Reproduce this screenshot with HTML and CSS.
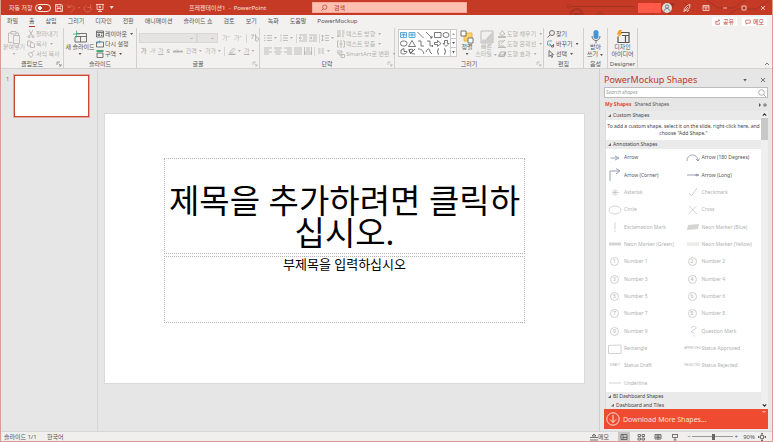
FILE: index.html
```html
<!DOCTYPE html>
<html lang="ko">
<head>
<meta charset="utf-8">
<title>프레젠테이션1 - PowerPoint</title>
<link rel="stylesheet" href="styles.css">
</head>
<body>
<div class="window">
<header class="titlebar">
  <div class="quick">
    <label class="autosave">자동 저장 <input type="checkbox" class="toggle"></label>
    <button class="tb" aria-label="저장"><svg viewBox="0 0 10 10"><path d="M1.500 1.500h6l1 1v6h-7zM3 1.500v2.500h4v-2.500M3 8.500v-3h4v3"/></svg></button>
    <button class="tb dim" aria-label="실행 취소"><svg viewBox="0 0 10 10"><path d="M2 1.500v3h3M2 4.500c2-3 6-2 6 .5S6 8 4.500 9"/></svg></button>
    <span class="caret dim"></span>
    <button class="tb dim" aria-label="다시 실행"><svg viewBox="0 0 10 10"><path d="M7.500 1.500v3h-3M7.500 3.500A3.500 3.500 0 1 1 3 2.500"/></svg></button>
    <button class="tb" aria-label="슬라이드 쇼"><svg viewBox="0 0 10 10"><path d="M1 1.500h8M2 1.500v5h6v-5M5 6.500v2M3 8.500h4M4.300 3v2l1.700-1z"/></svg></button>
    <span class="caret wide"></span>
  </div>
  <div class="doc">프레젠테이션1 &nbsp;-&nbsp; PowerPoint</div>
  <label class="find"><svg viewBox="0 0 10 10"><circle cx="6" cy="4" r="2.700"/><path d="M4 6L1.500 8.500"/></svg><input type="text" placeholder="검색" aria-label="검색"></label>
  <div class="sys">
    <svg class="circuit" viewBox="0 0 306 15"><circle cx="102" cy="6.500" r="1.500"/><path d="M104 6.500h64M190 2c-8 5-5 10-3 13M217 2c8 5 5 10 3 13M240 0l12 8h15l12-8M262 15l9-6h20l12-9M130 15a4 4 0 0 1 7 0"/><path d="M104 15a6 6 0 0 1 12 0M107 14h7M198 4h9l-5 10" stroke-width="2"/></svg>
    <span class="user"></span>
    <button class="avatar" aria-label="계정"><svg viewBox="0 0 10 10"><circle cx="5" cy="3.500" r="1.600"/><path d="M2 8.500c0-4 6-4 6 0"/></svg></button>
    <button class="tb" aria-label="펜"><svg viewBox="0 0 10 10"><path d="M2 8.500c0-3 2-6 6-7 0 4-2 6-5 6zM2 8.500L6 4M5 9l2-2"/></svg></button>
    <button class="tb" aria-label="리본 표시 옵션"><svg viewBox="0 0 10 10"><path d="M2 2.500h6v5h-6zM2 4h6M5 7v-2M4 5.500l1-1 1 1"/></svg></button>
    <button class="tb" aria-label="최소화"><svg viewBox="0 0 10 10"><path d="M3 5h4"/></svg></button>
    <button class="tb" aria-label="최대화"><svg viewBox="0 0 10 10"><path d="M3 3h4v4h-4z"/></svg></button>
    <button class="tb" aria-label="닫기"><svg viewBox="0 0 10 10"><path d="M3 3l4 4M7 3l-4 4"/></svg></button>
  </div>
</header>

<nav class="tabs">
  <a href="#">파일</a><a href="#" class="on">홈</a><a href="#">삽입</a><a href="#">그리기</a><a href="#">디자인</a><a href="#">전환</a><a href="#">애니메이션</a><a href="#">슬라이드 쇼</a><a href="#">검토</a><a href="#">보기</a><a href="#">녹화</a><a href="#">도움말</a><a href="#">PowerMockup</a>
  <div class="share">
    <button><svg viewBox="0 0 8 8"><path d="M3 3h-2v4h5v-2M2.500 5c0-2 1-3 3-3M4.500.500l2 1.500-2 1.500"/></svg>공유</button>
    <button><svg viewBox="0 0 8 8"><path d="M1 1.500h6v4h-3.500l-1.500 1.500v-1.500h-1z"/></svg>메모</button>
  </div>
</nav>

<section class="ribbon">
  <div class="group clip">
    <div class="tools">
      <button class="big off"><svg viewBox="0 0 14 14"><path d="M4 3h-2.500v9.500h4M9 3h2.500v2M4 1.500h5v2.500h-5z"/><path d="M6.500 5.500h6v8h-6z"/></svg>붙여넣기<span class="caret"></span></button>
      <div class="stack off">
        <button><svg viewBox="0 0 8 8"><path d="M2 0l3.500 6M6 0l-3.500 6"/><circle cx="2" cy="6.700" r="1"/><circle cx="6" cy="6.700" r="1"/></svg>잘라내기</button>
        <button><svg viewBox="0 0 8 8"><path d="M3 6h-2.500v-5h3l1 1M3.500 2.500h2.500l1.500 1.500v3.500h-4z"/></svg>복사<span class="caret"></span></button>
        <button><svg viewBox="0 0 8 8"><path d="M1 4l3-2 2 3-2 2.500zM5 2.500l2.500-2"/></svg>서식 복사</button>
      </div>
    </div>
    <h2>클립보드</h2><svg class="launch" viewBox="0 0 6 6"><path d="M1 4v-3h3M2.500 2.500l2.500 2.500M5 3v2h-2"/></svg>
  </div>
  <div class="group slides">
    <div class="tools">
      <button class="big"><svg viewBox="0 0 14 14"><path d="M3 3.500h10.500v8.500h-11.500v-5M2 6.500h11.500M7.500 6.500v5.500"/><path class="green" d="M0 4h7M3.500 .500v7"/></svg>새 슬라이드<span class="caret"></span></button>
      <div class="stack">
        <button><svg viewBox="0 0 8 8"><path d="M.500 1h7v6h-7zM.500 2.500h7M2 4h1.500v1.500h-1.500zM5 4h1.500M5 5.500h1.500"/></svg>레이아웃<span class="caret"></span></button>
        <button><svg viewBox="0 0 8 8"><path d="M.500 2h7v5h-7z"/><path class="blue" d="M1 4a2 2 0 0 1 3-2M3.500 .500l1 1.500-1.500 1"/></svg>다시 설정</button>
        <button><svg viewBox="0 0 8 8"><path class="green" d="M.500 1h7" stroke-width="2"/><path d="M1 3h6v4.500h-6z"/></svg>구역<span class="caret"></span></button>
      </div>
    </div>
    <h2>슬라이드</h2>
  </div>
  <div class="group font">
    <div class="tools col off">
      <div class="line">
        <select class="family" aria-label="글꼴" disabled><option></option></select><select class="size" aria-label="글꼴 크기" disabled><option></option></select>
        <button>가ˆ</button><button>가ˇ</button><i class="sep"></i><button aria-label="서식 지우기"><svg viewBox="0 0 8 8"><path d="M0 1h3l-2.500 4M4.500 0v5M4.500 2.500h1.500M4 6l2-2.500 2 1.500-2 2.500z"/></svg></button>
      </div>
      <div class="line tight">
        <button><b>가</b></button><button><em>가</em></button><button><u>가</u></button><button><b>S</b></button><button><s>abc</s></button><button>간격<span class="caret"></span></button><button>가가<span class="caret"></span></button><i class="sep"></i>
        <button aria-label="형광펜"><svg viewBox="0 0 8 8"><path d="M2 5l3.500-4 1.500 1.500-3.500 3.500h-1.500z"/><path d="M.500 7.300h7" stroke-width="1.400"/></svg><span class="caret"></span></button>
        <button><u>가</u><span class="caret"></span></button>
      </div>
    </div>
    <h2>글꼴</h2><svg class="launch faint" viewBox="0 0 6 6"><path d="M1 4v-3h3M2.500 2.500l2.500 2.500M5 3v2h-2"/></svg>
  </div>
  <div class="group para">
    <div class="tools off">
      <div class="col">
        <div class="line">
          <button aria-label="글머리 기호"><svg viewBox="0 0 8 8"><path d="M0 1.500h1.500M3 1.500h5M0 4h1.500M3 4h5M0 6.500h1.500M3 6.500h5"/></svg><span class="caret"></span></button>
          <button aria-label="번호 매기기"><svg viewBox="0 0 8 8"><path d="M1 .500v2M3 1.500h5M.500 4h1M3 4h5M1 5.500v2M3 6.500h5"/></svg><span class="caret"></span></button>
          <i class="sep"></i>
          <button aria-label="내어쓰기"><svg viewBox="0 0 8 8"><path d="M0 1h8M4 3h4M4 5h4M0 7h8M3 4h-3M1.500 2.500l-1.500 1.500 1.500 1.500"/></svg></button>
          <button aria-label="들여쓰기"><svg viewBox="0 0 8 8"><path d="M0 1h8M4 3h4M4 5h4M0 7h8M0 4h3M1.500 2.500l1.500 1.500-1.500 1.500"/></svg></button>
          <i class="sep"></i>
          <button aria-label="줄 간격"><svg viewBox="0 0 8 8"><path d="M1.500 1v6M0 2.500l1.500-1.500 1.500 1.500M0 5.500l1.500 1.500 1.500-1.500M4 1.500h4M4 4h4M4 6.500h4"/></svg><span class="caret"></span></button>
        </div>
        <div class="line">
          <button aria-label="왼쪽 맞춤"><svg viewBox="0 0 8 8"><path d="M0 1h8M0 3h5M0 5h8M0 7h5"/></svg></button>
          <button aria-label="가운데 맞춤"><svg viewBox="0 0 8 8"><path d="M0 1h8M1.500 3h5M0 5h8M1.500 7h5"/></svg></button>
          <button aria-label="오른쪽 맞춤"><svg viewBox="0 0 8 8"><path d="M0 1h8M3 3h5M0 5h8M3 7h5"/></svg></button>
          <button aria-label="양쪽 맞춤"><svg viewBox="0 0 8 8"><path d="M0 1h8M0 3h8M0 5h8M0 7h8"/></svg></button>
          <button aria-label="균등 분할"><svg viewBox="0 0 8 8"><path d="M.500 0v8M7.500 0v8M2 1h4M2 3h4M0 5h8M0 7h8"/></svg></button>
          <i class="sep"></i>
          <button aria-label="단"><svg viewBox="0 0 8 8"><path d="M1 2h2.500M4.500 2h2.500M1 4h2.500M4.500 4h2.500M1 6h2.500M4.500 6h2.500"/></svg><span class="caret"></span></button>
        </div>
      </div>
      <div class="stack">
        <button><svg viewBox="0 0 8 8"><path d="M1 0v7M3 0v7M0 5.500l1 1.500 1-1.500M5 1h2.500M5 3h2.500M6 4v3.500"/></svg>텍스트 방향<span class="caret"></span></button>
        <button><svg viewBox="0 0 8 8"><path d="M2 1h-1.500v6h1.500M6 1h1.500v6h-1.500M4 0v8M2.500 4h3"/></svg>텍스트 맞춤<span class="caret"></span></button>
        <button><svg viewBox="0 0 8 8"><path d="M0 1h5v2h-5zM2 3v2h4M4 4.500h3.500v3h-3.500z"/></svg>SmartArt로 변환<span class="caret"></span></button>
      </div>
    </div>
    <h2>단락</h2><svg class="launch faint" viewBox="0 0 6 6"><path d="M1 4v-3h3M2.500 2.500l2.500 2.500M5 3v2h-2"/></svg>
  </div>
  <div class="group draw">
    <div class="tools">
      <div class="gallery">
        <svg viewBox="0 0 51 26">
          <g class="blue"><path d="M1.500 2.500h6v5h-6zM10 2.500h6v5h-6zM3 4h3M4.500 4v3M11.500 4h3M13 4v3M1.500 5h6M10 5h6"/></g>
          <path d="M18.500 2l6 6M27 2l6 6M33 8v-2M33 8h-2M35.500 2.500h6.500v5h-6.500z"/><ellipse cx="47" cy="5" rx="3" ry="2.500"/>
          <rect x="1.500" y="11" width="6.500" height="5" rx="2.500"/><path d="M13 10.500l3.500 6h-7zM19 11h3v5h3M28 11h3v5h3M33 15l1 1-1 1M35.500 12.500h3v-2l3.500 3-3.500 3v-2h-3zM45.500 10.500h3v3h1.500l-3 3-3-3h1.500z"/>
          <path d="M2 23v-3l3-1.500v3l3 0c0 3-6 3-6 1.500zM10 19c0 3 2 5 6 5M11 24l5-5M10 20l3-1 1 2-3 2zM19 19c4 0 5 2 6 5M27 22c2-5 4-3 4 0l2 2M40 18.500c-2 0 0 3-2 3 2 0 0 3 2 3M45 18.500c2 0 0 3 2 3-2 0 0 3-2 3"/>
        </svg>
        <div class="scrolls"><button aria-label="위"><span class="caret up"></span></button><button aria-label="아래"><span class="caret"></span></button><button aria-label="자세히"><span class="caret more"></span></button></div>
      </div>
      <button class="big slim"><svg viewBox="0 0 14 14"><path class="gold" d="M4 3h8v8h-8z"/><path class="paper" d="M1 1h5v5h-5zM8 8h5v5h-5z"/></svg>정렬<span class="caret"></span></button>
      <button class="big slim off"><svg viewBox="0 0 14 14"><path d="M1 1h12v12h-12z"/><path class="grey" d="M1 13c1-5 3-4 4-3l8-9v12z"/></svg>빠른<span>스타일<span class="caret"></span></span></button>
      <div class="stack off">
        <button><svg viewBox="0 0 8 8"><path d="M1.500 4l3-3 2.500 3-3 1.500zM4 1v-1" /><path d="M0 7h8" stroke-width="1.600"/></svg>도형 채우기<span class="caret"></span></button>
        <button><svg viewBox="0 0 8 8"><path d="M6 1h-5v5h5M3 4l4-4"/><path d="M0 7.300h8" stroke-width="1.200"/></svg>도형 윤곽선<span class="caret"></span></button>
        <button><svg viewBox="0 0 8 8"><path d="M1 5l2-3h4.500l-2 3zM1 5v1.500h5l1.500-2.500v-2" stroke-width="1.200"/></svg>도형 효과<span class="caret"></span></button>
      </div>
    </div>
    <h2>그리기</h2><svg class="launch faint" viewBox="0 0 6 6"><path d="M1 4v-3h3M2.500 2.500l2.500 2.500M5 3v2h-2"/></svg>
  </div>
  <div class="group edit">
    <div class="tools"><div class="stack">
      <button><svg viewBox="0 0 8 8"><circle cx="5" cy="3" r="2.500"/><path d="M3 5l-2.500 2.500"/></svg>찾기</button>
      <button><svg viewBox="0 0 8 8"><path class="blue" d="M5 1h-3.500a1 1 0 0 0-1 1v3h3M2.500 3.500l1.500 1.500-1.500 1.500"/><path d="M6.500 4v3h-2v-1.500h2"/></svg>바꾸기<span class="caret"></span></button>
      <button><svg viewBox="0 0 8 8"><path d="M2 .500v6l1.500-1.500 1.200 2.500 1-.500-1.200-2.300h2z"/></svg>선택<span class="caret"></span></button>
    </div></div>
    <h2>편집</h2>
  </div>
  <div class="group voice">
    <div class="tools"><button class="big"><svg viewBox="0 0 14 14"><rect class="mic" x="4.500" y="0" width="5" height="9" rx="2.500"/><path d="M3 6c0 6 8 6 8 0M7 10.500v3"/></svg>받아<span>쓰기<span class="caret"></span></span></button></div>
    <h2>음성</h2>
  </div>
  <div class="group designer">
    <div class="tools"><button class="big"><svg viewBox="0 0 14 14"><path d="M5 2.500h8v10h-11v-6M6 5.500h7M9.500 5.500v7" stroke-width="1.200"/><path class="bolt" d="M3 0h3l-1.500 3h2l-5 5 1.200-3.500h-2z"/></svg>디자인<span>아이디어</span></button></div>
    <h2>Designer</h2>
  </div>
  <button class="collapse" aria-label="리본 메뉴 축소"><svg viewBox="0 0 6 6"><path d="M1 4l2-2 2 2"/></svg></button>
</section>

<main class="work">
  <aside class="thumbs"><span>1</span><a href="#" class="thumb" aria-label="슬라이드 1"></a></aside>
  <div class="canvas">
    <article class="slide">
      <h1 class="ph title">제목을 추가하려면 클릭하십시오.</h1>
      <p class="ph sub">부제목을 입력하십시오</p>
    </article>
  </div>
  <aside class="pane">
    <div class="panehead"><h2>PowerMockup Shapes</h2><span class="caret"></span><button aria-label="창 닫기"><svg viewBox="0 0 6 6"><path d="M1 1l4 4M5 1l-4 4"/></svg></button></div>
    <label class="lookup"><input type="text" placeholder="Search shapes" aria-label="Search shapes"><svg viewBox="0 0 8 8"><circle cx="3.500" cy="3.500" r="2.800"/><path d="M5.500 5.500l2.500 2.500"/></svg></label>
    <div class="panetabs"><a href="#" class="cur">My Shapes</a><a href="#">Shared Shapes</a><button aria-label="추가"><svg viewBox="0 0 10 6"><path class="solid" d="M1 1l2 2-2 2z"/><path d="M5 3h4M7 1v4"/></svg></button></div>
    <div class="panelist">
      <div class="content">
        <h3>Custom Shapes</h3>
        <p class="hint">To add a custom shape, select it on the slide, right-click here, and choose "Add Shape."</p>
        <h3>Annotation Shapes</h3>
        <ul class="shapes">
          <li class="live"><svg viewBox="0 0 14 14"><path d="M2.500 7h7M7 5l4 2-4 2"/></svg>Arrow</li>
          <li class="live"><svg viewBox="0 0 14 14"><path d="M1 10c0-8 11-8 11 0M10 8l2 2 1.500-2.500"/></svg>Arrow (180 Degrees)</li>
          <li class="live"><svg viewBox="0 0 14 14"><path d="M2 13v-10h9M8 .500l4 2.500-4 3"/></svg>Arrow (Corner)</li>
          <li class="live"><svg viewBox="0 0 14 14"><path d="M1 7h10M10 6l3 1-3 1z"/></svg>Arrow (Long)</li>
          <li><svg viewBox="0 0 14 14"><path d="M7 4v7M4 7.500h7M4.500 5l5 5M9.500 5l-5 5"/></svg>Asterisk</li>
          <li><svg viewBox="0 0 14 14"><path d="M3 8l2.500 3 5.500-8"/></svg>Checkmark</li>
          <li><svg viewBox="0 0 14 14"><ellipse cx="7" cy="7" rx="6" ry="4"/></svg>Circle</li>
          <li><svg viewBox="0 0 14 14"><path d="M3 3l8 8M10.500 3l-8 8"/></svg>Cross</li>
          <li><svg viewBox="0 0 14 14"><path d="M7 2.500v7M7 10.500v1.500"/></svg>Exclamation Mark</li>
          <li><svg viewBox="0 0 14 14"><path class="mark" d="M2 5l11-1-1 5-11 1z"/></svg>Neon Marker (Blue)</li>
          <li><svg viewBox="0 0 14 14"><path class="mark" d="M1 5.500h12v3h-12z"/></svg>Neon Marker (Green)</li>
          <li><svg viewBox="0 0 14 14"><path class="mark pale" d="M1 5.500l12-.500v4h-12z"/></svg>Neon Marker (Yellow)</li>
          <li><span class="num">1</span>Number 1</li><li><span class="num">2</span>Number 2</li>
          <li><span class="num">3</span>Number 3</li><li><span class="num">4</span>Number 4</li>
          <li><span class="num">5</span>Number 5</li><li><span class="num">6</span>Number 6</li>
          <li><span class="num">7</span>Number 7</li><li><span class="num">8</span>Number 8</li>
          <li><span class="num">9</span>Number 9</li>
          <li><svg viewBox="0 0 14 14"><path d="M5 4c1-2 5-2 5 0s-4 2-5 4c1 1 3 0 3 1.500M8 11v1.500"/></svg>Question Mark</li>
          <li><svg viewBox="0 0 14 14"><path d="M.500 3.500l12.500-.500v8.500h-12.500z"/></svg>Rectangle</li>
          <li><span class="stamp">APPROVED</span>Status Approved</li>
          <li><span class="stamp">DRAFT</span>Status Draft</li>
          <li><span class="stamp">REJECTED</span>Status Rejected</li>
          <li><svg viewBox="0 0 14 14"><path d="M1 7h12"/></svg>Underline</li>
        </ul>
        <h3>BI Dashboard Shapes</h3>
        <h3 class="nested">Dashboard and Tiles</h3>
      </div>
      <div class="bar"><svg viewBox="0 0 6 6"><path d="M1.500 4l1.500-1.500 1.500 1.500"/></svg><i></i><svg viewBox="0 0 6 6"><path d="M1.500 2l1.500 1.500 1.500-1.500"/></svg></div>
    </div>
    <button class="download"><svg viewBox="0 0 14 14"><circle cx="7" cy="7" r="6.200"/><path d="M7 3v7.500M4 7.500l3 3 3-3"/></svg>Download More Shapes...<svg class="tiny" viewBox="0 0 6 6"><path d="M1.500 2l1.500 1.500 1.500-1.500"/></svg></button>
  </aside>
</main>

<footer class="status">
  <span class="count">슬라이드 1/1</span><span>한국어</span>
  <div class="views">
    <button class="notes"><svg viewBox="0 0 8 8"><path d="M0 4.500h8M0 7h8M2 3h4l-2-2z"/></svg>메모</button>
    <button class="view sel" aria-label="기본"><svg viewBox="0 0 8 8"><path d="M1 1.500h6v5h-6zM3 1.500v5M3 4.500h4"/></svg></button>
    <button class="view" aria-label="여러 슬라이드"><svg viewBox="0 0 8 8"><path d="M1 1.500h2.500v2h-2.500zM5 1.500h2.500v2h-2.500zM1 5h2.500v2h-2.500zM5 5h2.500v2h-2.500z"/></svg></button>
    <button class="view" aria-label="읽기용 보기"><svg viewBox="0 0 8 8"><path d="M1 1.500h6v4.500h-6zM4 1.500v5.500M1.500 3h5M1.500 4.500h5"/></svg></button>
    <button class="view" aria-label="슬라이드 쇼"><svg viewBox="0 0 8 8"><path d="M1 1.500h6M1.500 1.500v3h5v-3M4 4.500v2.500M2.500 7h3"/></svg></button>
    <button class="step" aria-label="축소">−</button><input type="range" min="10" max="180" value="100" aria-label="확대/축소"><button class="step" aria-label="확대">+</button>
    <span class="pct">90%</span>
    <button class="view" aria-label="창에 맞춤"><svg viewBox="0 0 8 8"><path d="M2.500 2.500h3v3h-3zM4 0v2M4 6v2M0 4h2M6 4h2M3 1l1-1 1 1M3 7l1 1 1-1M1 3l-1 1 1 1M7 3l1 1-1 1"/></svg></button>
  </div>
</footer>
</div>
</body>
</html>
```
FILE: styles.css
```css
* { box-sizing: border-box; }
body {
  margin: 0;
  font: 6px/8px "Noto Sans", "Noto Sans CJK KR", sans-serif;
  color: #555;
}
button, input, select { font: inherit; color: inherit; margin: 0; padding: 0; border: 0; background: none; }
button { display: flex; align-items: center; white-space: nowrap; }
a { color: inherit; text-decoration: none; }
h1, h2, h3, p, ul { margin: 0; padding: 0; font-weight: 400; font-size: inherit; }
svg { display: block; flex: none; width: 8px; height: 8px; fill: none; stroke: currentColor; stroke-width: 0.8; }
.green { stroke: #3fae74; }
.blue { stroke: #3a9bd0; }
.caret {
  display: inline-block; flex: none; width: 3px; height: 2px; margin: 0 1px 0 2px;
  background: currentColor; clip-path: polygon(0 0, 100% 0, 50% 100%);
}

.window {
  display: flex; flex-direction: column; height: 100vh; overflow: hidden;
  background: #e6e6e6; border: solid #dc9c92; border-width: 0 1px 1px;
}

/* Title bar */
.titlebar { display: flex; align-items: center; flex: none; height: 15px; background: #c53a24; color: #fbe3dd; }
.quick { display: flex; align-items: center; flex: 0 0 180px; padding-left: 8px; gap: 2px; }
.autosave { display: flex; align-items: center; gap: 2px; white-space: nowrap; margin-right: 1px; }
.toggle {
  appearance: none; width: 16px; height: 8px; border: 1px solid #fbe3dd; border-radius: 4px;
  background: radial-gradient(circle at 4px 3px, #fff 2px, transparent 2px);
}
.tb svg { width: 10px; height: 10px; }
.dim { color: #dc6a56; }
.quick .caret { margin: 0; }
.quick .wide { width: 4px; height: 3px; margin-left: 3px; }
.doc { flex: 0 0 131px; padding-left: 8px; white-space: nowrap; }
.find {
  display: flex; align-items: center; flex: 1; gap: 6px; height: 11px; padding-left: 7px;
  background: #ffc0b2; border: 1px solid #f9a797; color: #b02e1c;
}
.find input { flex: 1; min-width: 0; }
.find input::placeholder { color: #b02e1c; opacity: 1; }
.sys { position: relative; display: flex; align-items: center; justify-content: flex-end; flex: 0 0 305px; height: 15px; padding-right: 4px; gap: 9px; }
.circuit { position: absolute; inset: 0; width: 100%; height: 15px; stroke: #a33425; stroke-width: 1; }
.sys > :not(.circuit) { position: relative; }
.user { width: 23px; height: 10px; background: #ff594a; margin-right: -8px; }
.avatar { width: 10px; height: 10px; border-radius: 50%; background: #ddd; color: #666; margin-right: 1px; }
.avatar svg { width: 10px; height: 10px; }

/* Tabs */
.tabs { display: flex; align-items: stretch; flex: none; height: 13px; padding-left: 6px; gap: 11px; background: #f2f1f0; white-space: nowrap; line-height: 12px; }
.tabs .on { height: 12px; border-bottom: 1px solid #c53a24; color: #333; }
.share { display: flex; align-items: center; gap: 5px; margin-left: auto; padding-right: 5px; }
.share button { height: 9px; padding: 0 3px; gap: 2px; background: #fff; color: #c0392b; }
.share svg { width: 6px; height: 6px; }

/* Ribbon */
.ribbon { position: relative; display: flex; flex: none; height: 41px; background: #f2f1f0; border-bottom: 1px solid #d4d2d0; }
.group { position: relative; flex: none; display: flex; flex-direction: column; justify-content: space-between; padding-top: 1px; border-right: 1px solid #d2d0ce; }
.group h2 { text-align: center; height: 8px; }
.tools { display: flex; height: 31px; }
.clip { width: 63px; }
.slides { width: 73px; }
.font { width: 123px; }
.para { width: 135px; }
.draw { width: 149px; }
.edit { width: 40px; }
.voice { width: 24px; }
.designer { width: 30px; }
.off { color: #b3b1af; }
.big { flex-direction: column; width: 26px; height: 31px; line-height: 7px; padding-top: 1px; }
.big svg { width: 14px; height: 14px; }
.big > .caret { margin: 2px 0 0; }
.slides .big { width: 32px; }
.slim { width: 19px; }
.voice .big, .designer .big { width: 100%; }
.stack { display: flex; flex-direction: column; justify-content: space-between; height: 30px; }
.stack button { height: 10px; gap: 1px; }
.col { display: flex; flex-direction: column; justify-content: flex-start; gap: 3px; padding: 4px 0 0 2px; }
.line { display: flex; align-items: center; gap: 2px; height: 10px; }
.font .line { gap: 4px; }
.font .tight { gap: 3px; padding-left: 2px; }
.tight .caret { margin: 0 0 0 2px; }
.sep { width: 1px; height: 9px; background: #d8d6d4; }
.family, .size {
  appearance: none; height: 10px; border: 1px solid #cfcdcb; border-radius: 0;
  background: linear-gradient(#aaa, #aaa) calc(100% - 3px) 50% / 3px 1px no-repeat #e1dfdd;
}
.family { width: 63px; }
.size { width: 22px; margin-left: -4px; }
.para .tools { gap: 2px; }
.para .col { width: 75px; padding-left: 4px; }
.launch { position: absolute; right: 1px; bottom: 1px; width: 6px; height: 6px; color: #888; }
.faint { color: #bbb; }
.gallery { display: flex; flex: none; width: 59px; height: 28px; margin: 0 2px 0 3px; background: #fff; border: 1px solid #cccac8; }
.gallery > svg { width: 51px; height: 26px; }
.scrolls { display: flex; flex-direction: column; flex: 1; border-left: 1px solid #cccac8; }
.scrolls button { flex: 1; justify-content: center; border-bottom: 1px solid #cccac8; }
.scrolls button:last-child { border: 0; }
.scrolls .caret { margin: 0; }
.up { transform: rotate(180deg); opacity: 0.5; }
.scrolls .more { height: 3px; }
.draw .slim { flex: none; width: 16px; }
.draw .big + .big { width: 23px; }
.gold { fill: #ffd06b; stroke: #e5a92e; }
.paper { fill: #fff; }
.grey { fill: #d0cecc; stroke: none; }
.mic { fill: #4196d8; stroke: none; }
.bolt { fill: #f5a128; stroke: none; }
.edit .stack { padding-left: 3px; }
.collapse { position: absolute; right: 2px; bottom: 1px; }
.collapse svg { width: 6px; height: 6px; }

/* Workspace */
.work { display: flex; flex: 1; min-height: 0; }
.thumbs { display: flex; align-items: flex-start; flex: 0 0 97px; padding: 6px 8px 0 5px; gap: 5px; color: #d8553f; border-right: 1px solid #d6d6d6; }
.thumbs span { width: 3px; }
.thumb { flex: 1; aspect-ratio: 16 / 9; background: #fff; border: 1px solid #c8472f; outline: 1px solid #e2a99f; }
.canvas { flex: 1; min-width: 0; padding: 44px 14px 0 6px; }
.slide { aspect-ratio: 16 / 9; padding: 44px 59px 0; background: #fff; border: 1px solid #dadada; color: #000; text-align: center; }
.ph { border: 1px dotted #b4b4b4; }
.title { display: flex; align-items: flex-end; height: 96px; margin-bottom: 2px; padding-bottom: 4px; font-size: 33px; line-height: 32px; }
.sub { height: 67px; font-size: 13px; line-height: 14px; }

/* Shapes pane */
.pane { display: flex; flex-direction: column; flex: 0 0 173px; padding: 4px 4px 2px 4px; border-left: 1px solid #d0d0d0; font-size: 5px; line-height: 7px; }
.panehead { display: flex; align-items: center; flex: none; height: 14px; padding-right: 2px; }
.panehead h2 { flex: 1; font-size: 9px; line-height: 12px; color: #c0392b; }
.panehead .caret { width: 4px; height: 3px; margin-right: 13px; }
.panehead svg { width: 6px; height: 6px; }
.lookup { display: flex; align-items: center; flex: none; height: 11px; padding: 0 1px; background: #fff; border: 1px solid #bcbcbc; color: #999; }
.lookup input { flex: 1; min-width: 0; font-style: italic; }
.lookup input::placeholder { color: #999; }
.panetabs { display: flex; align-items: center; flex: none; height: 13px; gap: 3px; padding-left: 1px; }
.panetabs .cur { color: #e04a30; font-weight: 700; }
.panetabs button { margin-left: auto; }
.panetabs svg { width: 10px; height: 6px; }
.solid { fill: currentColor; stroke: none; }
.panelist { display: flex; flex: 1; min-height: 0; margin-left: 1px; }
.content { display: flex; flex-direction: column; flex: 1; background: #fff; border-left: 1px solid #ddd; overflow: hidden; }
.content h3 { display: flex; align-items: center; flex: none; gap: 2px; height: 9px; padding-left: 2px; background: #eaeaea; color: #444; }
.content h3::before { content: ""; width: 3px; height: 3px; background: #666; clip-path: polygon(100% 0, 100% 100%, 0 100%); }
.content .nested { height: 8px; padding-left: 5px; }
.hint { flex: none; height: 20px; padding-top: 3px; text-align: center; color: #444; }
.shapes { flex: 1; display: grid; grid-template-columns: 1fr 1fr; grid-auto-rows: 1fr; list-style: none; color: #b0b0b0; }
.shapes li { display: flex; align-items: center; gap: 2px; padding-left: 2px; white-space: nowrap; }
.shapes svg { width: 14px; height: 14px; stroke: #c6c6c6; }
.shapes .live { color: #555; }
.shapes .live svg { stroke: #808aa0; }
.shapes .mark { fill: #d5d5d5; stroke: none; }
.shapes .pale { fill: #ececec; }
.num { width: 9px; height: 9px; margin: 0 3px 0 2px; border: 1px solid #cfcfcf; border-radius: 50%; text-align: center; }
.stamp { display: flex; justify-content: center; width: 14px; font-family: "Liberation Sans", sans-serif; font-size: 3px; }
.bar { display: flex; flex-direction: column; flex: 0 0 7px; background: #efefef; }
.bar svg { width: 7px; height: 7px; stroke: #333; stroke-width: 1; }
.bar i { width: 7px; height: 22px; margin-bottom: auto; background: #c8c8c8; }
.download { position: relative; flex: none; height: 20px; padding-left: 2px; gap: 3px; background: #ee4b30; color: #fde0d9; font-size: 7px; }
.download svg { width: 14px; height: 14px; stroke-width: 1; }
.download .tiny { position: absolute; right: 1px; top: 0; width: 6px; height: 6px; }

/* Status bar */
.status { display: flex; align-items: center; flex: none; height: 10px; padding: 0 4px 0 3px; background: #f0efee; border-top: 1px solid #d8d6d4; white-space: nowrap; }
.count { width: 43px; }
.views { display: flex; align-items: center; margin-left: auto; }
.notes { margin-right: 9px; }
.view { width: 12px; height: 9px; justify-content: center; margin-right: 5px; }
.view:last-child { margin: 0; }
.sel { background: #c9c7c5; }
.step { width: 6px; justify-content: center; }
.views input { appearance: none; width: 41px; height: 8px; background: linear-gradient(#999, #999) 0 50% / 100% 1px no-repeat; }
.views input::-webkit-slider-thumb { appearance: none; width: 3px; height: 6px; background: #666; }
.pct { margin: 0 1px 0 4px; }
```
